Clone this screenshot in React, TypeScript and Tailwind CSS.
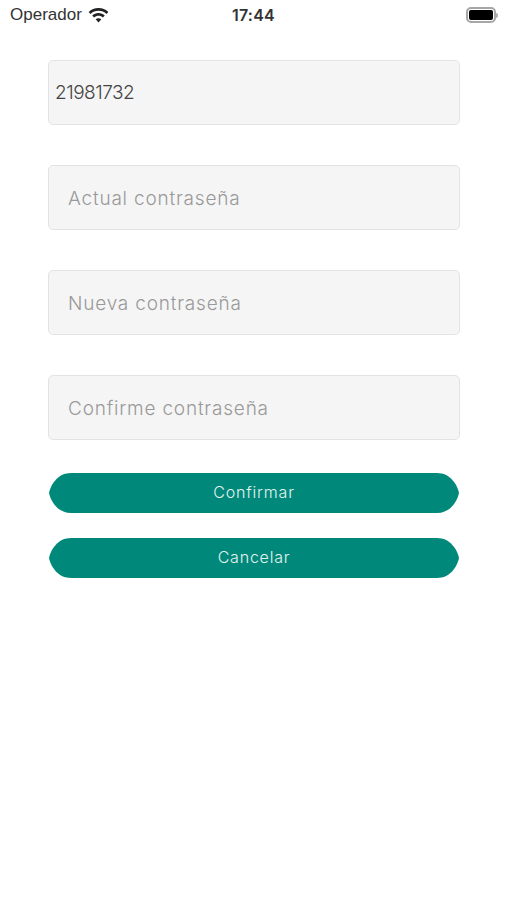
import React from "react";

const font = "font-['Inter','Noto_Sans',sans-serif]";

const Field = ({ value, placeholder }: { value?: string; placeholder?: string }) => (
  <input
    defaultValue={value}
    placeholder={placeholder}
    className={`${font} w-full h-[65px] bg-[#f5f5f5] border border-[#e3e3e3] rounded-[5px] outline-none text-[19px] font-light text-[#444444] placeholder:text-[#999999] ${value ? "pl-[6px] tracking-[-0.5px]" : "pl-[19px] pt-px tracking-[0.8px]"}`}
  />
);

const Btn = ({ label }: { label: string }) => (
  <button className={`${font} block mx-px w-[410px] h-10 pb-0.5 bg-[#00897a] text-[#e6f3f1] text-[16px] font-light tracking-[0.8px] [clip-path:path('M22_0H388C401_0_408_11_410_20C408_29_401_40_388_40H22C9_40_2_29_0_20C2_11_9_0_22_0Z')]`}>
    {label}
  </button>
);

const App = () => {
  return (
    <div className="w-[507px] h-[900px] bg-white overflow-hidden">
      <div className={`${font} relative h-[30px] flex items-center justify-between pl-[10px] pr-[9px] text-[#333333]`}>
        <div className="flex items-center gap-[6px]">
          <span className="text-[17px] font-['Liberation_Sans',sans-serif]">Operador</span>
          <svg width="21" height="15" viewBox="0 0 22 16" fill="#222222">
            <path d="M11 0C6.9 0 3.2 1.6.5 4.2l2 2.1C4.7 4.2 7.7 2.9 11 2.9s6.3 1.3 8.5 3.4l2-2.1C18.8 1.6 15.1 0 11 0z" />
            <path d="M11 5.4c-2.6 0-5 1-6.7 2.7l2 2.1c1.2-1.2 2.9-1.9 4.7-1.9s3.5.7 4.7 1.9l2-2.1C16 6.4 13.6 5.4 11 5.4z" />
            <path d="M11 10.8c-1.2 0-2.2.5-3 1.2l3 3.4 3-3.4c-.8-.7-1.8-1.2-3-1.2z" />
          </svg>
        </div>
        <span className="absolute left-[232px] top-[3px] text-[16px] font-semibold tracking-[0.2px]">17:44</span>
        <div className="flex items-center">
          <div className="w-[30px] h-[16px] border-2 border-[#a6a6a6] rounded-[5px] p-px">
            <div className="w-full h-full bg-black rounded-[2px]" />
          </div>
          <div className="w-[2px] h-[5px] bg-[#b0b0b0] rounded-r-full" />
        </div>
      </div>
      <div className="px-[48px] pt-[30px]">
        <div className="flex flex-col gap-10 w-[412px]">
          <Field value="21981732" />
          <Field placeholder="Actual contraseña" />
          <Field placeholder="Nueva contraseña" />
          <Field placeholder="Confirme contraseña" />
        </div>
        <div className="flex flex-col gap-[25px] mt-[33px]">
          <Btn label="Confirmar" />
          <Btn label="Cancelar" />
        </div>
      </div>
    </div>
  );
};

export default App;
